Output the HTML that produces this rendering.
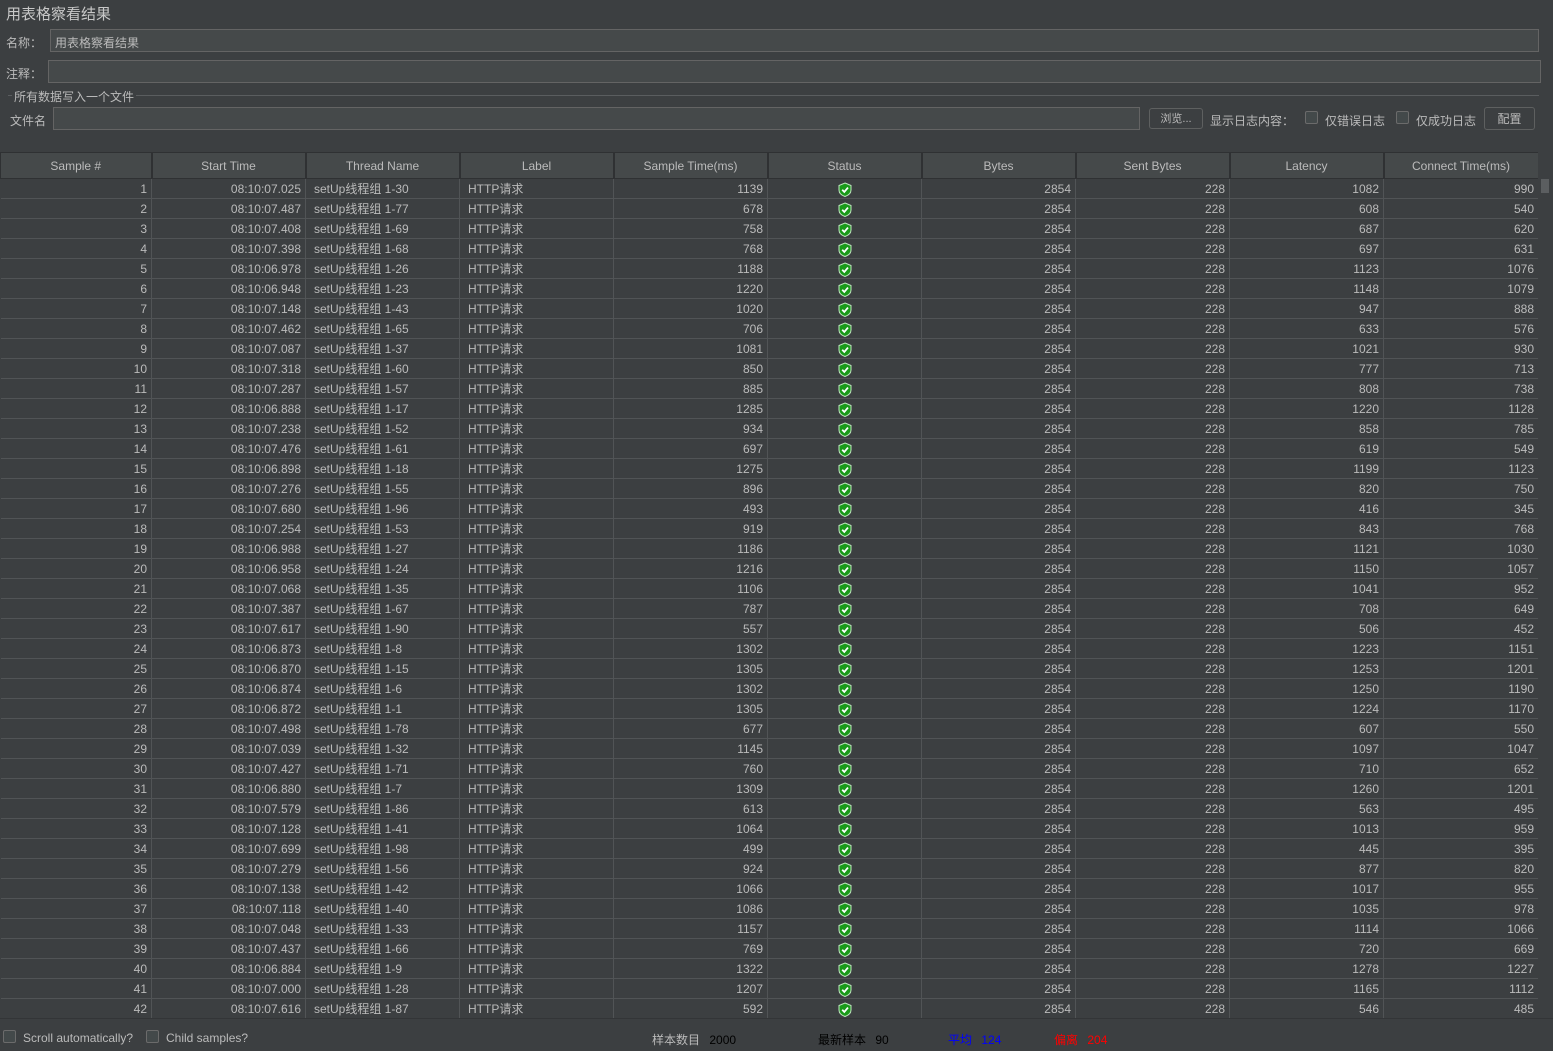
<!DOCTYPE html>
<html><head><meta charset="utf-8"><style>
*{margin:0;padding:0;box-sizing:border-box}
body{width:1553px;height:1051px;background:#3c3f41;color:#bbbbbb;font-family:"Liberation Sans","Noto Sans CJK SC",sans-serif;font-size:12px;position:relative;overflow:hidden}
.a{position:absolute;white-space:nowrap}
.inp{position:absolute;background:#45494a;border:1px solid #646464}
.btn{position:absolute;border:1px solid #5e6060;border-radius:3px;background:#3c3f41;text-align:center;line-height:20px}
.cb{position:absolute;width:13px;height:13px;border:1px solid #6b6b6b;border-radius:2px;background:#43494a}
table{position:absolute;left:0;top:152px;border-collapse:collapse;table-layout:fixed;width:1538px}
th{height:26px;background:#45494a;font-weight:normal;border:1px solid #2f3133;border-right:2px solid #2f3133;color:#bbb;font-size:12px}
td{height:20px;line-height:18px;border-right:1px solid #515456;border-bottom:1px solid #515456;padding:0 4px;text-align:right;overflow:hidden;white-space:nowrap}
td:nth-child(3),td:nth-child(4){text-align:left;padding-left:8px}
td:nth-child(6){text-align:center;padding-top:1px;line-height:0}
td svg{width:14px;height:15px;vertical-align:middle}
</style></head><body>
<svg width="0" height="0" style="position:absolute"><defs><g id="s"><path d="M7 1 L13 3.5 V8 C13 11.5 10 13.5 7 14.5 C4 13.5 1 11.5 1 8 V3.5 Z" fill="#1a9a1a" stroke="#bfe6bf" stroke-width="1"/><path d="M4.2 7.8 L6.3 9.9 L10 5.6" fill="none" stroke="#fff" stroke-width="1.8"/></g></defs></svg>
<div class="a" style="left:6px;top:3px;font-size:15px;color:#c8c8c8">用表格察看结果</div>
<div class="a" style="left:6px;top:34px">名称：</div>
<div class="inp" style="left:50px;top:29px;width:1489px;height:23px;padding:4px 4px;color:#bbb">用表格察看结果</div>
<div class="a" style="left:6px;top:65px">注释：</div>
<div class="inp" style="left:48px;top:60px;width:1493px;height:23px"></div>
<div class="a" style="left:8px;top:95px;border-top:1px solid #5a5d5f;width:1531px;top:95px"></div>
<div class="a" style="left:12px;top:88px;background:#3c3f41;padding:0 2px">所有数据写入一个文件</div>
<div class="a" style="left:10px;top:112px">文件名</div>
<div class="inp" style="left:53px;top:107px;width:1087px;height:23px"></div>
<div class="btn" style="left:1149px;top:108px;width:54px;height:21px;font-size:11px">浏览...</div>
<div class="a" style="left:1210px;top:112px">显示日志内容：</div>
<div class="cb" style="left:1305px;top:111px"></div>
<div class="a" style="left:1325px;top:112px">仅错误日志</div>
<div class="cb" style="left:1396px;top:111px"></div>
<div class="a" style="left:1416px;top:112px">仅成功日志</div>
<div class="btn" style="left:1484px;top:107px;width:51px;height:23px;line-height:22px">配置</div>
<div class="a" style="left:1540px;top:179px;width:13px;height:840px;background:#3c3f41"></div>
<div class="a" style="left:1541px;top:179px;width:8px;height:14px;background:#5b5e60"></div>
<div style="position:absolute;left:0;top:152px;width:1538px;height:866px;overflow:hidden">
<table style="top:0">
<colgroup><col style="width:151px"><col style="width:154px"><col style="width:154px"><col style="width:154px"><col style="width:154px"><col style="width:154px"><col style="width:154px"><col style="width:154px"><col style="width:154px"><col style="width:155px"></colgroup>
<tr><th>Sample #</th><th>Start Time</th><th>Thread Name</th><th>Label</th><th>Sample Time(ms)</th><th>Status</th><th>Bytes</th><th>Sent Bytes</th><th>Latency</th><th>Connect Time(ms)</th></tr>
<tr><td>1<td>08:10:07.025<td>setUp线程组 1-30<td>HTTP请求<td>1139<td><svg viewBox="0 0 14 15"><use href="#s"/></svg><td>2854<td>228<td>1082<td>990</tr>
<tr><td>2<td>08:10:07.487<td>setUp线程组 1-77<td>HTTP请求<td>678<td><svg viewBox="0 0 14 15"><use href="#s"/></svg><td>2854<td>228<td>608<td>540</tr>
<tr><td>3<td>08:10:07.408<td>setUp线程组 1-69<td>HTTP请求<td>758<td><svg viewBox="0 0 14 15"><use href="#s"/></svg><td>2854<td>228<td>687<td>620</tr>
<tr><td>4<td>08:10:07.398<td>setUp线程组 1-68<td>HTTP请求<td>768<td><svg viewBox="0 0 14 15"><use href="#s"/></svg><td>2854<td>228<td>697<td>631</tr>
<tr><td>5<td>08:10:06.978<td>setUp线程组 1-26<td>HTTP请求<td>1188<td><svg viewBox="0 0 14 15"><use href="#s"/></svg><td>2854<td>228<td>1123<td>1076</tr>
<tr><td>6<td>08:10:06.948<td>setUp线程组 1-23<td>HTTP请求<td>1220<td><svg viewBox="0 0 14 15"><use href="#s"/></svg><td>2854<td>228<td>1148<td>1079</tr>
<tr><td>7<td>08:10:07.148<td>setUp线程组 1-43<td>HTTP请求<td>1020<td><svg viewBox="0 0 14 15"><use href="#s"/></svg><td>2854<td>228<td>947<td>888</tr>
<tr><td>8<td>08:10:07.462<td>setUp线程组 1-65<td>HTTP请求<td>706<td><svg viewBox="0 0 14 15"><use href="#s"/></svg><td>2854<td>228<td>633<td>576</tr>
<tr><td>9<td>08:10:07.087<td>setUp线程组 1-37<td>HTTP请求<td>1081<td><svg viewBox="0 0 14 15"><use href="#s"/></svg><td>2854<td>228<td>1021<td>930</tr>
<tr><td>10<td>08:10:07.318<td>setUp线程组 1-60<td>HTTP请求<td>850<td><svg viewBox="0 0 14 15"><use href="#s"/></svg><td>2854<td>228<td>777<td>713</tr>
<tr><td>11<td>08:10:07.287<td>setUp线程组 1-57<td>HTTP请求<td>885<td><svg viewBox="0 0 14 15"><use href="#s"/></svg><td>2854<td>228<td>808<td>738</tr>
<tr><td>12<td>08:10:06.888<td>setUp线程组 1-17<td>HTTP请求<td>1285<td><svg viewBox="0 0 14 15"><use href="#s"/></svg><td>2854<td>228<td>1220<td>1128</tr>
<tr><td>13<td>08:10:07.238<td>setUp线程组 1-52<td>HTTP请求<td>934<td><svg viewBox="0 0 14 15"><use href="#s"/></svg><td>2854<td>228<td>858<td>785</tr>
<tr><td>14<td>08:10:07.476<td>setUp线程组 1-61<td>HTTP请求<td>697<td><svg viewBox="0 0 14 15"><use href="#s"/></svg><td>2854<td>228<td>619<td>549</tr>
<tr><td>15<td>08:10:06.898<td>setUp线程组 1-18<td>HTTP请求<td>1275<td><svg viewBox="0 0 14 15"><use href="#s"/></svg><td>2854<td>228<td>1199<td>1123</tr>
<tr><td>16<td>08:10:07.276<td>setUp线程组 1-55<td>HTTP请求<td>896<td><svg viewBox="0 0 14 15"><use href="#s"/></svg><td>2854<td>228<td>820<td>750</tr>
<tr><td>17<td>08:10:07.680<td>setUp线程组 1-96<td>HTTP请求<td>493<td><svg viewBox="0 0 14 15"><use href="#s"/></svg><td>2854<td>228<td>416<td>345</tr>
<tr><td>18<td>08:10:07.254<td>setUp线程组 1-53<td>HTTP请求<td>919<td><svg viewBox="0 0 14 15"><use href="#s"/></svg><td>2854<td>228<td>843<td>768</tr>
<tr><td>19<td>08:10:06.988<td>setUp线程组 1-27<td>HTTP请求<td>1186<td><svg viewBox="0 0 14 15"><use href="#s"/></svg><td>2854<td>228<td>1121<td>1030</tr>
<tr><td>20<td>08:10:06.958<td>setUp线程组 1-24<td>HTTP请求<td>1216<td><svg viewBox="0 0 14 15"><use href="#s"/></svg><td>2854<td>228<td>1150<td>1057</tr>
<tr><td>21<td>08:10:07.068<td>setUp线程组 1-35<td>HTTP请求<td>1106<td><svg viewBox="0 0 14 15"><use href="#s"/></svg><td>2854<td>228<td>1041<td>952</tr>
<tr><td>22<td>08:10:07.387<td>setUp线程组 1-67<td>HTTP请求<td>787<td><svg viewBox="0 0 14 15"><use href="#s"/></svg><td>2854<td>228<td>708<td>649</tr>
<tr><td>23<td>08:10:07.617<td>setUp线程组 1-90<td>HTTP请求<td>557<td><svg viewBox="0 0 14 15"><use href="#s"/></svg><td>2854<td>228<td>506<td>452</tr>
<tr><td>24<td>08:10:06.873<td>setUp线程组 1-8<td>HTTP请求<td>1302<td><svg viewBox="0 0 14 15"><use href="#s"/></svg><td>2854<td>228<td>1223<td>1151</tr>
<tr><td>25<td>08:10:06.870<td>setUp线程组 1-15<td>HTTP请求<td>1305<td><svg viewBox="0 0 14 15"><use href="#s"/></svg><td>2854<td>228<td>1253<td>1201</tr>
<tr><td>26<td>08:10:06.874<td>setUp线程组 1-6<td>HTTP请求<td>1302<td><svg viewBox="0 0 14 15"><use href="#s"/></svg><td>2854<td>228<td>1250<td>1190</tr>
<tr><td>27<td>08:10:06.872<td>setUp线程组 1-1<td>HTTP请求<td>1305<td><svg viewBox="0 0 14 15"><use href="#s"/></svg><td>2854<td>228<td>1224<td>1170</tr>
<tr><td>28<td>08:10:07.498<td>setUp线程组 1-78<td>HTTP请求<td>677<td><svg viewBox="0 0 14 15"><use href="#s"/></svg><td>2854<td>228<td>607<td>550</tr>
<tr><td>29<td>08:10:07.039<td>setUp线程组 1-32<td>HTTP请求<td>1145<td><svg viewBox="0 0 14 15"><use href="#s"/></svg><td>2854<td>228<td>1097<td>1047</tr>
<tr><td>30<td>08:10:07.427<td>setUp线程组 1-71<td>HTTP请求<td>760<td><svg viewBox="0 0 14 15"><use href="#s"/></svg><td>2854<td>228<td>710<td>652</tr>
<tr><td>31<td>08:10:06.880<td>setUp线程组 1-7<td>HTTP请求<td>1309<td><svg viewBox="0 0 14 15"><use href="#s"/></svg><td>2854<td>228<td>1260<td>1201</tr>
<tr><td>32<td>08:10:07.579<td>setUp线程组 1-86<td>HTTP请求<td>613<td><svg viewBox="0 0 14 15"><use href="#s"/></svg><td>2854<td>228<td>563<td>495</tr>
<tr><td>33<td>08:10:07.128<td>setUp线程组 1-41<td>HTTP请求<td>1064<td><svg viewBox="0 0 14 15"><use href="#s"/></svg><td>2854<td>228<td>1013<td>959</tr>
<tr><td>34<td>08:10:07.699<td>setUp线程组 1-98<td>HTTP请求<td>499<td><svg viewBox="0 0 14 15"><use href="#s"/></svg><td>2854<td>228<td>445<td>395</tr>
<tr><td>35<td>08:10:07.279<td>setUp线程组 1-56<td>HTTP请求<td>924<td><svg viewBox="0 0 14 15"><use href="#s"/></svg><td>2854<td>228<td>877<td>820</tr>
<tr><td>36<td>08:10:07.138<td>setUp线程组 1-42<td>HTTP请求<td>1066<td><svg viewBox="0 0 14 15"><use href="#s"/></svg><td>2854<td>228<td>1017<td>955</tr>
<tr><td>37<td>08:10:07.118<td>setUp线程组 1-40<td>HTTP请求<td>1086<td><svg viewBox="0 0 14 15"><use href="#s"/></svg><td>2854<td>228<td>1035<td>978</tr>
<tr><td>38<td>08:10:07.048<td>setUp线程组 1-33<td>HTTP请求<td>1157<td><svg viewBox="0 0 14 15"><use href="#s"/></svg><td>2854<td>228<td>1114<td>1066</tr>
<tr><td>39<td>08:10:07.437<td>setUp线程组 1-66<td>HTTP请求<td>769<td><svg viewBox="0 0 14 15"><use href="#s"/></svg><td>2854<td>228<td>720<td>669</tr>
<tr><td>40<td>08:10:06.884<td>setUp线程组 1-9<td>HTTP请求<td>1322<td><svg viewBox="0 0 14 15"><use href="#s"/></svg><td>2854<td>228<td>1278<td>1227</tr>
<tr><td>41<td>08:10:07.000<td>setUp线程组 1-28<td>HTTP请求<td>1207<td><svg viewBox="0 0 14 15"><use href="#s"/></svg><td>2854<td>228<td>1165<td>1112</tr>
<tr><td>42<td>08:10:07.616<td>setUp线程组 1-87<td>HTTP请求<td>592<td><svg viewBox="0 0 14 15"><use href="#s"/></svg><td>2854<td>228<td>546<td>485</tr>
</table></div>
<div class="a" style="left:0;top:1018px;width:1553px;border-top:1px solid #333537"></div>
<div class="cb" style="left:3px;top:1030px"></div>
<div class="a" style="left:23px;top:1031px">Scroll automatically?</div>
<div class="cb" style="left:146px;top:1030px"></div>
<div class="a" style="left:166px;top:1031px">Child samples?</div>
<div class="a" style="left:652px;top:1031px;color:#bbb">样本数目 <span style="color:#000;margin-left:6px">2000</span></div>
<div class="a" style="left:818px;top:1031px;color:#000">最新样本 <span style="margin-left:6px">90</span></div>
<div class="a" style="left:948px;top:1031px;color:#0000ff">平均 <span style="margin-left:6px">124</span></div>
<div class="a" style="left:1054px;top:1031px;color:#ff0000">偏离 <span style="margin-left:6px">204</span></div>
</body></html>
